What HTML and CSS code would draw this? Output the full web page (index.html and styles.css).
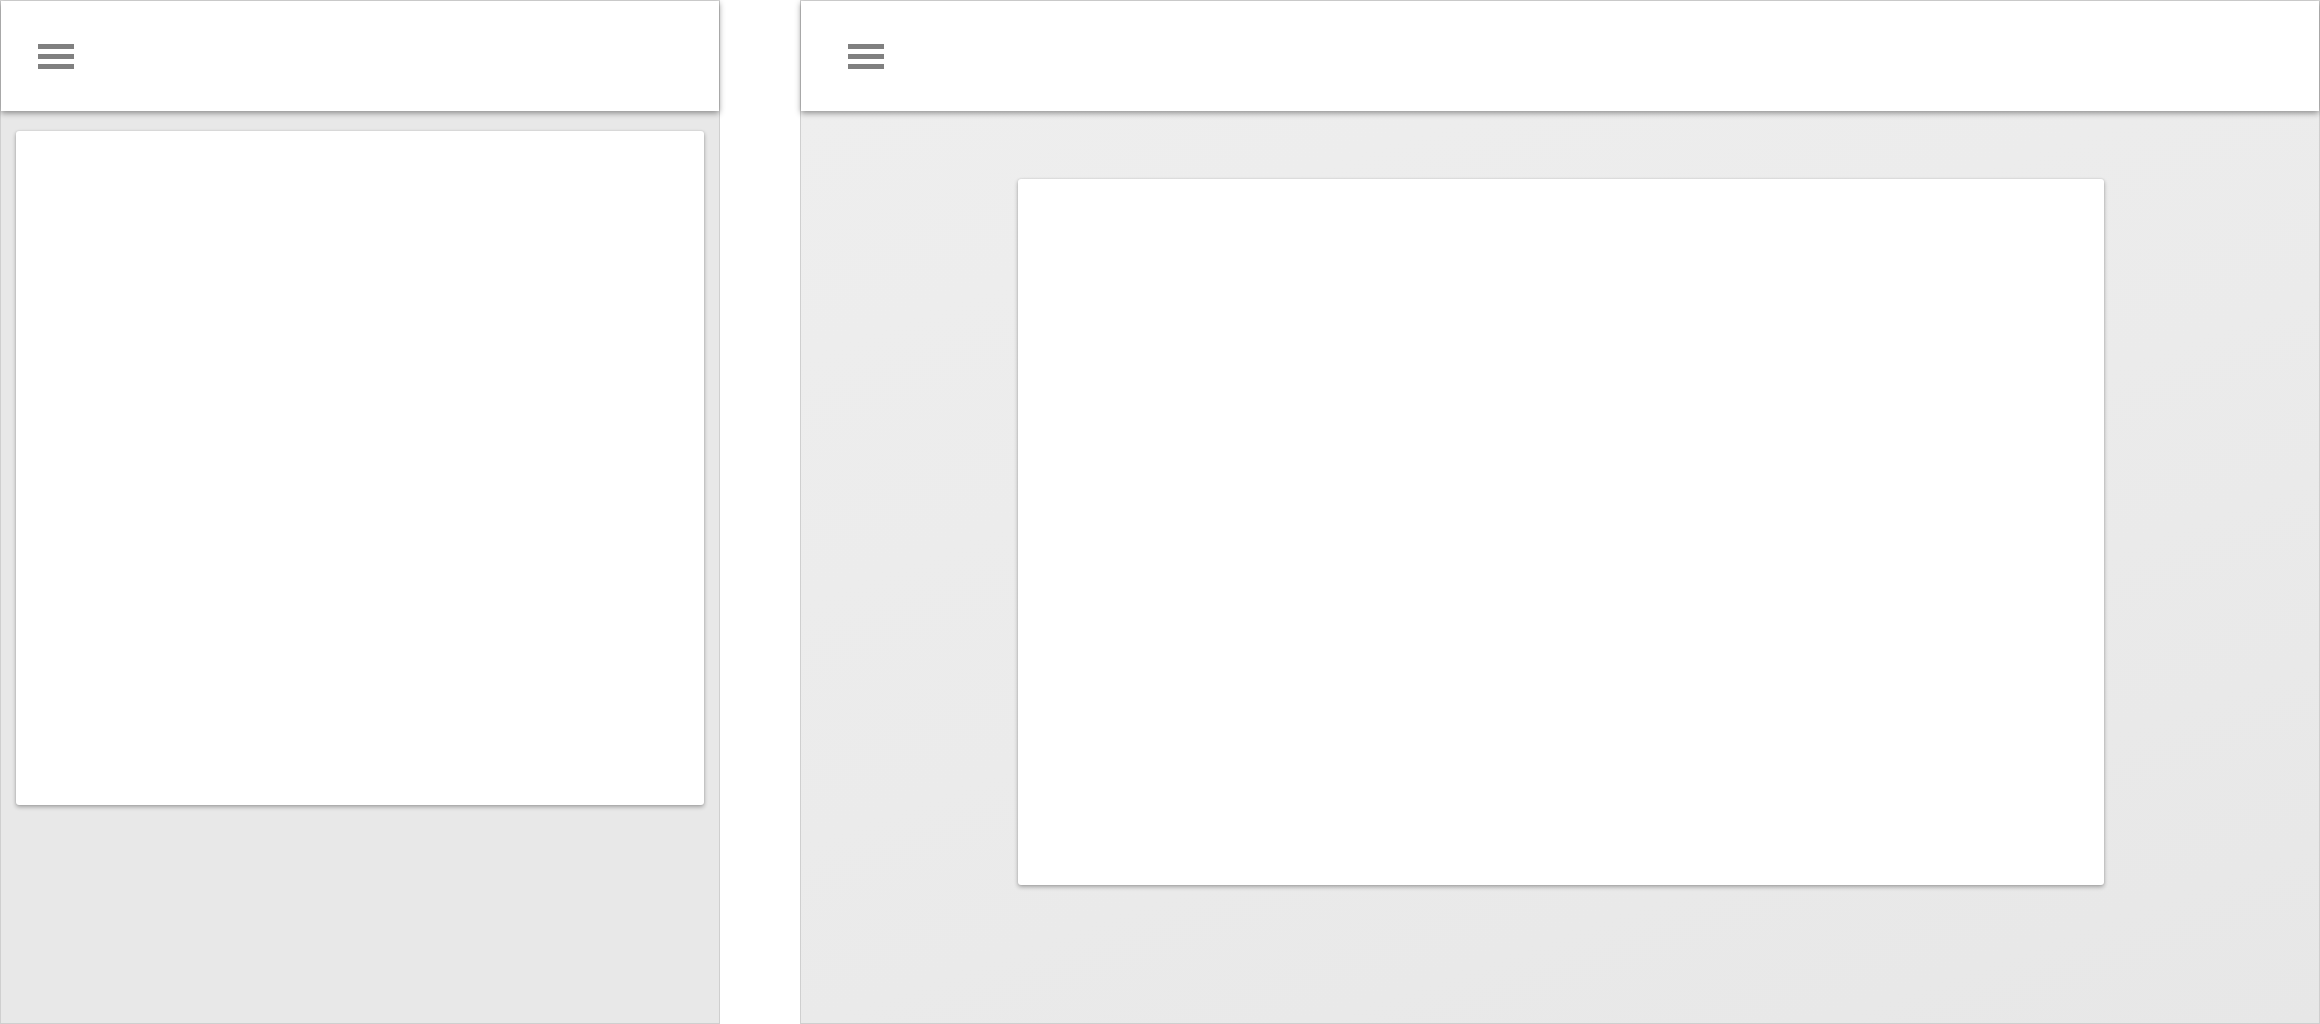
FILE: index.html
```html
<!DOCTYPE html>
<html>
<head>
<meta charset="utf-8">
<link rel="stylesheet" href="styles.css">
</head>
<body>
<div class="stage">
  <div class="frame frame-narrow">
    <header class="bar">
      <div class="menu"><span></span><span></span><span></span></div>
    </header>
    <main class="content content-narrow">
      <div class="card card-narrow"></div>
    </main>
  </div>
  <div class="frame frame-wide">
    <header class="bar">
      <div class="menu"><span></span><span></span><span></span></div>
    </header>
    <main class="content content-wide">
      <div class="card card-wide"></div>
    </main>
  </div>
</div>
</body>
</html>
```

FILE: styles.css
```css
html, body {
  margin: 0;
  padding: 0;
  background: #ffffff;
  font-family: "Roboto", "Liberation Sans", sans-serif;
}
.stage {
  display: flex;
  gap: 80px;
  width: 2320px;
  height: 1024px;
}
.frame {
  display: flex;
  flex-direction: column;
  box-sizing: border-box;
  height: 1024px;
  border: 1px solid #cfcfcf;
  border-top-color: #dcdcdc;
}
.frame-narrow {
  width: 720px;
  flex: none;
}
.frame-wide {
  flex: 1;
}
.bar {
  position: relative;
  z-index: 1;
  height: 110px;
  flex: none;
  background: #ffffff;
  box-shadow: 0 2px 6px rgba(0, 0, 0, 0.42);
  display: flex;
  align-items: center;
}
.frame-narrow .bar { padding-left: 37px; }
.frame-wide .bar { padding-left: 47px; }
.menu {
  display: flex;
  flex-direction: column;
  gap: 5.5px;
  width: 36px;
  margin-top: 1px;
}
.menu span {
  display: block;
  height: 4.5px;
  background: #808080;
}
.content {
  flex: 1;
}
.content-narrow {
  background: #e8e8e8;
  padding: 20px 15px 0 15px;
}
.content-wide {
  background: linear-gradient(160deg, #eeeeee 0%, #ebebeb 50%, #e7e7e7 100%);
  display: flex;
  justify-content: center;
  padding-top: 68px;
  padding-left: 2px;
  align-items: flex-start;
}
.card {
  background: #ffffff;
  border-radius: 3px;
  box-shadow: 0 2px 4px rgba(0, 0, 0, 0.3), 0 0 2px rgba(0, 0, 0, 0.12);
}
.card-narrow {
  height: 674px;
}
.card-wide {
  width: 1086px;
  height: 706px;
}
```
